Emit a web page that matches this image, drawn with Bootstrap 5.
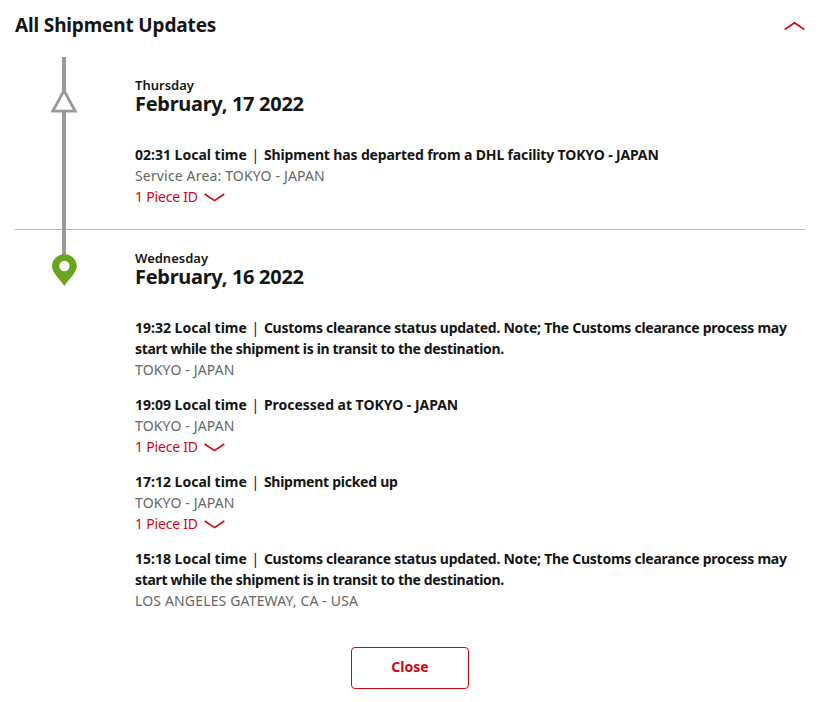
<!DOCTYPE html>
<html lang="en">
<head>
    <meta charset="UTF-8">
    <meta name="viewport" content="width=device-width, initial-scale=1.0">
    <title>All Shipment Updates</title>
    <link href="https://cdn.jsdelivr.net/npm/bootstrap@5.3.0/dist/css/bootstrap.min.css" rel="stylesheet">
    <style>
        body { font-family: "Noto Sans", "Liberation Sans", sans-serif; font-size: 14px; line-height: 21px; color: #151515; background: #fff; }
        .updates-wrap { width: 790px; margin-left: 15px; }
        .updates-head { height: 57px; padding-top: 12px; }
        .updates-title { font-size: 19px; line-height: 26px; font-weight: 700; margin: 0; letter-spacing: -0.15px; }
        .toggle-icon { margin-top: 9px; }
        .day-block { position: relative; padding-left: 120px; }
        .day-first { height: 173px; padding-top: 21px; border-bottom: 1px solid #b3b3b3; }
        .day-second { padding-top: 21px; }
        .rail-line { position: absolute; left: 47px; top: 0; width: 4px; height: 202px; background: #999; z-index: 1; }
        .rail-icon { position: absolute; z-index: 2; }
        .rail-triangle { left: 36px; top: 30px; }
        .rail-pin { left: 36px; top: 24px; }
        .day-name { font-size: 13px; line-height: 15px; font-weight: 600; }
        .day-date { font-size: 20px; line-height: 22px; font-weight: 700; letter-spacing: -0.3px; }
        .day-events { margin-top: 29px; }
        .event-row { margin-bottom: 14px; }
        .event-title { font-weight: 700; }
        .event-sep { margin: 0 1px; font-weight: 400; }
        .event-msg { letter-spacing: -0.14px; }
        .event-msg-tight { letter-spacing: -0.26px; }
        .event-msg-loose { letter-spacing: -0.02px; }
        .event-line-two { letter-spacing: -0.33px; }
        .event-place { color: #666; letter-spacing: 0.16px; }
        .piece-link { color: #d40511; text-decoration: none; display: inline-flex; align-items: center; gap: 6px; letter-spacing: -0.2px; }
        .close-btn { width: 118px; height: 42px; border: 1px solid #d40511; border-radius: 4px; color: #d40511; font-size: 14px; font-weight: 700; background: #fff; padding: 0 0 3px; }
        .close-btn:hover { color: #d40511; border-color: #d40511; background: #fff; }
        .close-row { margin-top: 36px; }
    </style>
</head>
<body>
    <div class="updates-wrap">
        <div class="updates-head d-flex justify-content-between align-items-start">
            <h2 class="updates-title">All Shipment Updates</h2>
            <svg class="toggle-icon" width="21" height="10" viewBox="0 0 21 10" fill="none" stroke="#d40511" stroke-width="1.6"><path d="M0.7 8.5 L10.5 1.8 L20.3 8.5"/></svg>
        </div>

        <div class="day-block day-first">
            <div class="rail-line"></div>
            <svg class="rail-icon rail-triangle" width="28" height="27" viewBox="0 0 28 27" fill="#fff" stroke="#999" stroke-width="2.8"><path d="M13 3.5 L24.2 24.2 L1.8 24.2 Z"/></svg>
            <div class="day-name">Thursday</div>
            <div class="day-date">February, 17 2022</div>
            <div class="day-events">
                <div class="event-row">
                    <div class="event-title">02:31 Local time <span class="event-sep">|</span> <span class="event-msg">Shipment has departed from a DHL facility TOKYO - JAPAN</span></div>
                    <div class="event-place">Service Area: TOKYO - JAPAN</div>
                    <a href="#" class="piece-link">1 Piece ID
                        <svg width="21" height="10" viewBox="0 0 21 10" fill="none" stroke="#d40511" stroke-width="1.6"><path d="M0.7 2 L10.5 8.6 L20.3 2"/></svg>
                    </a>
                </div>
            </div>
        </div>

        <div class="day-block day-second">
            <svg class="rail-icon rail-pin" width="27" height="33" viewBox="0 0 27 33"><path fill="#6aa51d" d="M13.5 0.3 C6.5 0.3 1 5.5 1 12 C1 19 9 25 13.3 32 C17.6 25 25.8 19 25.8 12 C25.8 5.5 20.5 0.3 13.5 0.3 Z"/><circle cx="13.4" cy="12" r="5.2" fill="#fff"/></svg>
            <div class="day-name">Wednesday</div>
            <div class="day-date">February, 16 2022</div>
            <div class="day-events">
                <div class="event-row">
                    <div class="event-title">19:32 Local time <span class="event-sep">|</span> <span class="event-msg-tight">Customs clearance status updated. Note; The Customs clearance process may</span><br><span class="event-line-two">start while the shipment is in transit to the destination.</span></div>
                    <div class="event-place">TOKYO - JAPAN</div>
                </div>
                <div class="event-row">
                    <div class="event-title">19:09 Local time <span class="event-sep">|</span> <span class="event-msg-loose">Processed at TOKYO - JAPAN</span></div>
                    <div class="event-place">TOKYO - JAPAN</div>
                    <a href="#" class="piece-link">1 Piece ID
                        <svg width="21" height="10" viewBox="0 0 21 10" fill="none" stroke="#d40511" stroke-width="1.6"><path d="M0.7 2 L10.5 8.6 L20.3 2"/></svg>
                    </a>
                </div>
                <div class="event-row">
                    <div class="event-title">17:12 Local time <span class="event-sep">|</span> <span class="event-msg-tight">Shipment picked up</span></div>
                    <div class="event-place">TOKYO - JAPAN</div>
                    <a href="#" class="piece-link">1 Piece ID
                        <svg width="21" height="10" viewBox="0 0 21 10" fill="none" stroke="#d40511" stroke-width="1.6"><path d="M0.7 2 L10.5 8.6 L20.3 2"/></svg>
                    </a>
                </div>
                <div class="event-row">
                    <div class="event-title">15:18 Local time <span class="event-sep">|</span> <span class="event-msg-tight">Customs clearance status updated. Note; The Customs clearance process may</span><br><span class="event-line-two">start while the shipment is in transit to the destination.</span></div>
                    <div class="event-place">LOS ANGELES GATEWAY, CA - USA</div>
                </div>
            </div>
        </div>

        <div class="close-row text-center">
            <button type="button" class="btn close-btn">Close</button>
        </div>
    </div>
    <script src="https://cdn.jsdelivr.net/npm/bootstrap@5.3.0/dist/js/bootstrap.bundle.min.js"></script>
</body>
</html>
